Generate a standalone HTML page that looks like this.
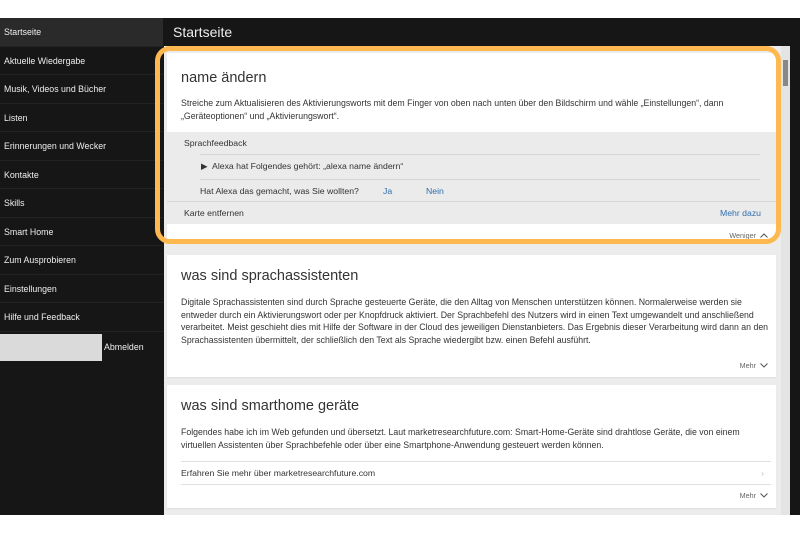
<!DOCTYPE html>
<html><head><meta charset="utf-8"><style>
*{margin:0;padding:0;box-sizing:border-box}
body{width:800px;height:533px;background:#fff;font-family:"Liberation Sans",Arial,sans-serif;position:relative;overflow:hidden}
.abs{position:absolute}
#dark{left:0;top:18px;width:800px;height:497px;background:#161616}
#side .it{position:absolute;left:0;width:163px;height:28.5px;border-bottom:1px solid #222;color:#eee;font-size:8.8px;padding-left:4px;line-height:28px}
#main{left:164px;top:46px;width:626px;height:469px;background:#ececec}
.card{position:absolute;left:3px;width:609px;background:#fff;box-shadow:0 1px 1px #ddd}
.t{position:absolute;font-size:14.5px;color:#333;left:14px}
.p{position:absolute;font-size:8.75px;color:#333;line-height:12.5px;left:14px;width:588px}
.s{font-size:8.7px;color:#333;position:absolute}
.blue{color:#2f6fad}
.mehr{position:absolute;right:8px;font-size:7.2px;color:#666;display:flex;align-items:center;gap:4px}
</style></head><body>
<div id="dark" class="abs"></div>
<div id="side">
<div class="it" style="top:18px;background:#2a2a2a">Startseite</div>
<div class="it" style="top:46.5px">Aktuelle Wiedergabe</div>
<div class="it" style="top:75px">Musik, Videos und Bücher</div>
<div class="it" style="top:103.5px">Listen</div>
<div class="it" style="top:132px">Erinnerungen und Wecker</div>
<div class="it" style="top:160.5px">Kontakte</div>
<div class="it" style="top:189px">Skills</div>
<div class="it" style="top:217.5px">Smart Home</div>
<div class="it" style="top:246px">Zum Ausprobieren</div>
<div class="it" style="top:274.5px">Einstellungen</div>
<div class="it" style="top:303px">Hilfe und Feedback</div>
<div class="abs" style="left:0;top:334px;width:102px;height:27px;background:#dadada"></div>
<div class="abs" style="left:104px;top:342px;font-size:8.8px;color:#eee">Abmelden</div>
</div>
<div class="abs" style="left:173px;top:24px;font-size:14px;color:#eee">Startseite</div>
<div id="main" class="abs">
<div class="abs" style="left:617px;top:0;width:9px;height:469px;background:#e4e4e4"></div>
<div class="abs" style="left:619px;top:14px;width:5px;height:26px;background:#888"></div>
<div class="card" style="top:7px;height:187px">
<div class="t" style="top:17px">name ändern</div>
<div class="p" style="top:44px">Streiche zum Aktualisieren des Aktivierungsworts mit dem Finger von oben nach unten über den Bildschirm und wähle „Einstellungen“, dann „Geräteoptionen“ und „Aktivierungswort“.</div>
<div class="abs" style="left:0;top:79px;width:609px;height:92px;background:#ebebeb">
<div class="s" style="left:17px;top:6px">Sprachfeedback</div>
<div class="abs" style="left:33px;top:22px;width:560px;height:1px;background:#d6d6d6"></div>
<div class="s" style="left:34px;top:29px">▶&nbsp; Alexa hat Folgendes gehört: „alexa name ändern“</div>
<div class="abs" style="left:33px;top:47px;width:560px;height:1px;background:#d6d6d6"></div>
<div class="s" style="left:33px;top:54px">Hat Alexa das gemacht, was Sie wollten?</div>
<div class="s blue" style="left:216px;top:54px">Ja</div>
<div class="s blue" style="left:259px;top:54px">Nein</div>
<div class="abs" style="left:0;top:69px;width:609px;height:1px;background:#d6d6d6"></div>
<div class="s" style="left:17px;top:76px">Karte entfernen</div>
<div class="s blue" style="right:15px;top:76px">Mehr dazu</div>
</div>
<div class="mehr" style="top:178px">Weniger <svg width="8" height="5" viewBox="0 0 8 5"><path d="M0.5 4.5L4 1L7.5 4.5" fill="none" stroke="#555" stroke-width="1"/></svg></div>
</div>
<div class="card" style="top:209px;height:122px">
<div class="t" style="top:13px">was sind sprachassistenten</div>
<div class="p" style="top:41px">Digitale Sprachassistenten sind durch Sprache gesteuerte Geräte, die den Alltag von Menschen unterstützen können. Normalerweise werden sie entweder durch ein Aktivierungswort oder per Knopfdruck aktiviert. Der Sprachbefehl des Nutzers wird in einen Text umgewandelt und anschließend verarbeitet. Meist geschieht dies mit Hilfe der Software in der Cloud des jeweiligen Dienstanbieters. Das Ergebnis dieser Verarbeitung wird dann an den Sprachassistenten übermittelt, der schließlich den Text als Sprache wiedergibt bzw. einen Befehl ausführt.</div>
<div class="mehr" style="top:106px">Mehr <svg width="8" height="5" viewBox="0 0 8 5"><path d="M0.5 0.5L4 4L7.5 0.5" fill="none" stroke="#555" stroke-width="1"/></svg></div>
</div>
<div class="card" style="top:339px;height:123px">
<div class="t" style="top:13px">was sind smarthome geräte</div>
<div class="p" style="top:41px">Folgendes habe ich im Web gefunden und übersetzt. Laut marketresearchfuture.com: Smart-Home-Geräte sind drahtlose Geräte, die von einem virtuellen Assistenten über Sprachbefehle oder über eine Smartphone-Anwendung gesteuert werden können.</div>
<div class="abs" style="left:14px;top:76px;width:590px;height:1px;background:#e0e0e0"></div>
<div class="s" style="left:14px;top:83px">Erfahren Sie mehr über marketresearchfuture.com</div>
<div class="s" style="right:12px;top:83px;color:#bbb">›</div>
<div class="abs" style="left:14px;top:99px;width:590px;height:1px;background:#e0e0e0"></div>
<div class="mehr" style="top:106px">Mehr <svg width="8" height="5" viewBox="0 0 8 5"><path d="M0.5 0.5L4 4L7.5 0.5" fill="none" stroke="#555" stroke-width="1"/></svg></div>
</div>
</div>
<div class="abs" style="left:155px;top:46px;width:626px;height:198px;border:5px solid #fdb84f;border-radius:15px"></div>
</body></html>
